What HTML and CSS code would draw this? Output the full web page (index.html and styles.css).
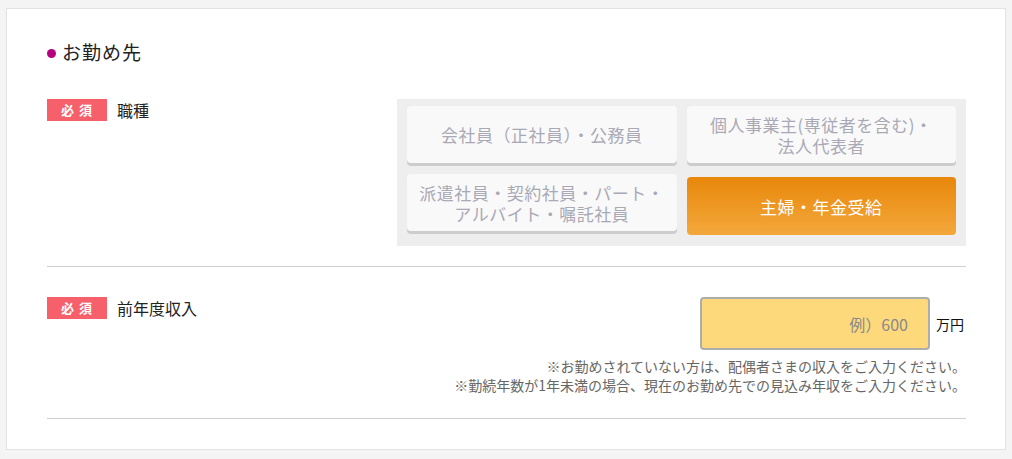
FILE: index.html
```html
<!DOCTYPE html>
<html>
    <head>
        <title>お勤め先</title>
        <meta charset="UTF-8">
        <meta name="viewport" content="width=device-width, initial-scale=1.0">
        <link rel="stylesheet" href="styles.css">
    </head>
    <body>
        <div class="formCard">
            <h2 class="sectionTitle"><span class="bullet"></span>お勤め先</h2>

            <div class="formRow">
                <div class="rowLabel">
                    <span class="required">必 須</span>
                    <span class="labelText">職種</span>
                </div>
                <div class="rowBody">
                    <div class="choiceBox">
                        <button class="choice" type="button">会社員（正社員）・公務員</button>
                        <button class="choice" type="button">個人事業主(専従者を含む)・<br>法人代表者</button>
                        <button class="choice" type="button">派遣社員・契約社員・パート・<br>アルバイト・嘱託社員</button>
                        <button class="choice selected" type="button">主婦・年金受給</button>
                    </div>
                </div>
            </div>

            <div class="formRow">
                <div class="rowLabel">
                    <span class="required">必 須</span>
                    <span class="labelText">前年度収入</span>
                </div>
                <div class="rowBody incomeBody">
                    <div class="incomeLine">
                        <input type="text" class="incomeInput" placeholder="例）600">
                        <span class="unit">万円</span>
                    </div>
                    <p class="note">※お勤めされていない方は、配偶者さまの収入をご入力ください。<br>※勤続年数が1年未満の場合、現在のお勤め先での見込み年収をご入力ください。</p>
                </div>
            </div>
        </div>
    </body>
</html>
```

FILE: styles.css
```css
body{
    margin: 0;
    padding: 8px 6px;
    background-color: #f4f4f4;
    font-family: "Noto Sans CJK JP", "Noto Sans", sans-serif;
    color: #222;
}

.formCard{
    background-color: #fff;
    border: 1px solid #e2e2e2;
    padding: 30px 39px 30px 40px;
}

.sectionTitle{
    display: flex;
    align-items: center;
    margin: 0 0 34px 0;
    font-size: 19px;
    font-weight: normal;
    line-height: 26px;
    letter-spacing: 1px;
}
.bullet{
    width: 9px;
    height: 9px;
    border-radius: 50%;
    background-color: #b5007f;
    margin-right: 6px;
    margin-top: 2px;
}

.formRow{
    display: flex;
    border-bottom: 1px solid #cfcfcf;
    padding-bottom: 20px;
}
.formRow + .formRow{
    padding-top: 30px;
    padding-bottom: 23px;
}

.rowLabel{
    width: 350px;
    display: flex;
    align-items: flex-start;
}
.required{
    display: inline-block;
    width: 60px;
    height: 22px;
    line-height: 22px;
    background-color: #f5606a;
    color: #fff;
    font-size: 13px;
    font-weight: bold;
    text-align: center;
    letter-spacing: 1px;
}
.labelText{
    margin-left: 10px;
    font-size: 16px;
    line-height: 22px;
}

.rowBody{
    flex: 1;
}

.choiceBox{
    display: grid;
    grid-template-columns: 1fr 1fr;
    column-gap: 10px;
    row-gap: 8px;
    background-color: #eeeeee;
    padding: 7px 10px 11px 10px;
}
.choice{
    height: 57px;
    margin-bottom: 3px;
    border: none;
    border-radius: 4px;
    background-color: #f9f9f9;
    box-shadow: 0 3px 0 #cdcdcd;
    color: #a9a9b6;
    font-family: inherit;
    font-size: 17px;
    line-height: 21px;
    letter-spacing: 0.5px;
    padding: 0 4px;
    cursor: pointer;
}
.choice.selected{
    margin-top: 3px;
    margin-bottom: 0;
    height: 58px;
    box-shadow: none;
    background: linear-gradient(#e8870a, #f3a83c);
    color: #fff;
}

.incomeBody{
    text-align: right;
}
.incomeLine{
    display: flex;
    justify-content: flex-end;
    align-items: center;
}
.incomeInput{
    width: 230px;
    height: 53px;
    box-sizing: border-box;
    border: 2px solid #adadad;
    border-radius: 4px;
    background-color: #fdd97c;
    text-align: right;
    padding: 0 20px;
    font-family: inherit;
    font-size: 16px;
}
.incomeInput::placeholder{
    color: #8a8a8a;
}
.unit{
    margin-left: 6px;
    margin-right: 2px;
    font-size: 14px;
    color: #111;
}
.note{
    margin: 7px 0 0 0;
    font-size: 14px;
    line-height: 19px;
    color: #666;
}
```
